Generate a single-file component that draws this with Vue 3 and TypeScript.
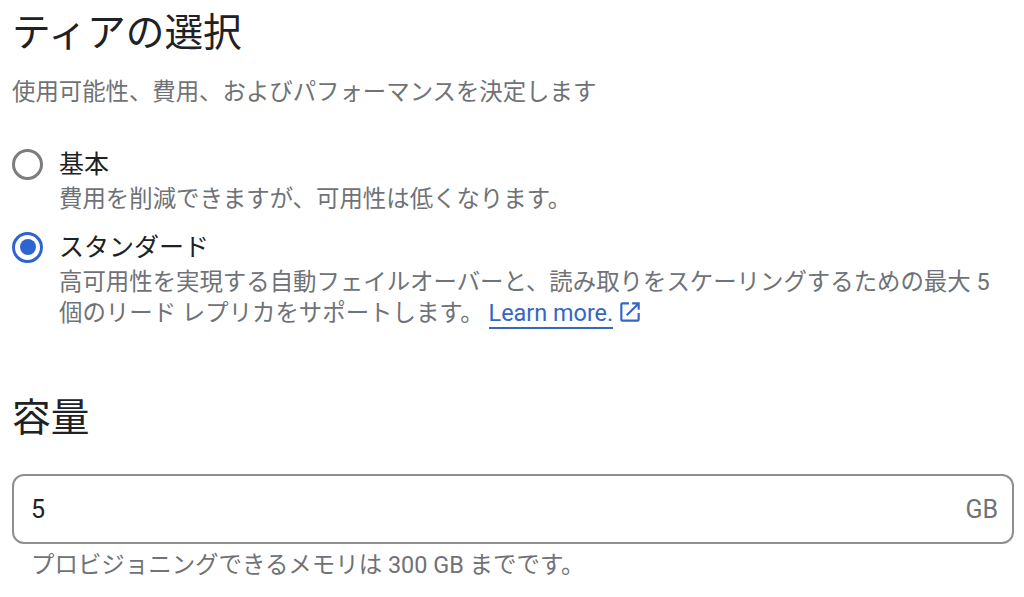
<script setup lang="ts">
const title = 'ティアの選択'
</script>

<template>
  <main class="page">
    <h1 class="title">{{ title }}</h1>
    <p class="sub">使用可能性、費用、およびパフォーマンスを決定します</p>
    <div class="options">
      <div class="option">
        <span class="radio"></span>
        <div class="text">
          <div class="label">基本</div>
          <div class="desc">費用を削減できますが、可用性は低くなります。</div>
        </div>
      </div>
      <div class="option">
        <span class="radio on"><span class="dot"></span></span>
        <div class="text">
          <div class="label">スタンダード</div>
          <div class="desc">高可用性を実現する自動フェイルオーバーと、読み取りをスケーリングするための最大 5 個のリード レプリカをサポートします。 <a class="link"><span class="link-text">Learn more.</span><svg class="ext" viewBox="0 0 24 24" width="24" height="24"><path d="M5 3h6v2H5v14h14v-6h2v6a2 2 0 0 1-2 2H5a2 2 0 0 1-2-2V5a2 2 0 0 1 2-2zm9 0h7v7h-2V6.400l-9.300 9.300-1.400-1.400L17.600 5H14z"/></svg></a></div>
        </div>
      </div>
    </div>
    <h2 class="title cap">容量</h2>
    <div class="field"><span class="val">5</span><span class="unit">GB</span></div>
    <p class="hint">プロビジョニングできるメモリは 300 GB までです。</p>
  </main>
</template>

<style>
body { background: #fff; }
</style>
<style scoped>
.page { width: 1024px; height: 597px; overflow: hidden; box-sizing: border-box; padding: 8px 10px 0 12px; font-family: Roboto, "Noto Sans CJK JP", sans-serif; color: #6f7276; }
.title { margin: 0; font-weight: 400; font-size: 38.7px; line-height: 50px; color: #202124; }
.sub { margin: 17px 0 0; font-size: 23.4px; line-height: 34px; }
.options { margin-top: 39px; display: flex; flex-direction: column; gap: 15px; }
.option { display: flex; gap: 16px; }
.radio { flex: none; width: 31px; height: 31px; margin-top: 1px; box-sizing: border-box; border: 3.5px solid #7d7d7d; border-radius: 50%; display: flex; align-items: center; justify-content: center; }
.radio.on { border-color: #2f63cf; }
.dot { width: 16px; height: 16px; border-radius: 50%; background: #2f63cf; }
.text { flex: 1; min-width: 0; padding-right: 2px; }
.label { font-size: 25px; line-height: 34px; color: #202124; }
.desc { margin-top: 2px; font-size: 23.42px; line-height: 31.5px; }
.link { color: #3566c4; white-space: nowrap; margin-left: -1px; }
.link-text { border-bottom: 2px solid #3566c4; }
.ext { width: 26px; height: 26px; fill: #3566c4; vertical-align: -4px; margin-left: 4px; }
.cap { margin-top: 63px; }
.field { margin-top: 31px; height: 70px; box-sizing: border-box; border: 2px solid #8f8f8f; border-radius: 12px; display: flex; align-items: center; justify-content: space-between; padding: 2px 14px 0 17px; font-size: 25px; }
.val { color: #202124; }
.hint { margin: 4px 0 0 19px; font-size: 23.45px; line-height: 34px; }
</style>
